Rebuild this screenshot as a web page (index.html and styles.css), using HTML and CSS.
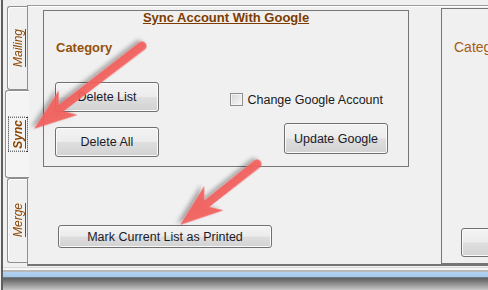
FILE: index.html
```html
<!DOCTYPE html>
<html lang="en">
  <head>
    <meta charset="UTF-8" />
    <title>Sync Account With Google</title>
    <link rel="stylesheet" href="styles.css">
  </head>
  <body>
    <div class="window">
      <div class="client">
        <div class="tabs">
          <div class="tab"><span class="tab-label">Mailing</span></div>
          <div class="tab tab-active"><span class="tab-label">Sync</span></div>
          <div class="tab"><span class="tab-label">Merge</span></div>
        </div>

        <div class="panel">
          <div class="sync-col">
            <div class="group">
              <div class="group-title">Sync Account With Google</div>
              <div class="category">Category</div>
              <div class="actions">
                <div class="btn-stack">
                  <button class="btn btn-wide">Delete List</button>
                  <button class="btn btn-wide">Delete All</button>
                </div>
                <div class="google">
                  <label class="check"><span class="check-box"></span>Change Google Account</label>
                  <button class="btn btn-update">Update Google</button>
                </div>
              </div>
            </div>
            <button class="btn btn-print">Mark Current List as Printed</button>
          </div>

          <div class="group-next">
            <div class="category-light">Category</div>
            <button class="btn btn-cut"></button>
          </div>
        </div>
      </div>
      <div class="frame"></div>

      <!-- callout arrows drawn over the form -->
      <svg class="arrows" width="488" height="290" viewBox="0 0 488 290">
        <defs>
          <filter id="shadow" x="-20%" y="-20%" width="140%" height="140%">
            <feDropShadow dx="2" dy="3" stdDeviation="2" flood-color="#000" flood-opacity="0.35" />
          </filter>
        </defs>
        <path class="arrow" transform="translate(142 46) rotate(142.5)"
          d="M0,-4.5 L102,-4 L93,-15.5 L136,0 L93,15.5 L102,4 L0,4.5 A4.5,4.5 0 0 1 0,-4.5 Z" />
        <path class="arrow" transform="translate(257 164) rotate(141.6)"
          d="M0,-4.5 L64,-4 L55,-15.5 L98,0 L55,15.5 L64,4 L0,4.5 A4.5,4.5 0 0 1 0,-4.5 Z" />
      </svg>
    </div>
  </body>
</html>
```

FILE: styles.css
```css
* {
  margin: 0;
  padding: 0;
  box-sizing: border-box;
}

body {
  background: #f0f0f0;
  font-family: "Liberation Sans", Arial, sans-serif;
}

.window {
  position: relative;
  width: 488px;
  height: 290px;
  overflow: hidden;
  background: #f0f0f0;
}

.client {
  display: flex;
  align-items: flex-start;
  height: 267px;
  margin-left: 1px;
  border-left: 2px solid #5f5f5f;
}

/* vertical tabs */
.tabs {
  display: flex;
  flex-direction: column;
  width: 20px;
  margin-left: 4px;
  margin-top: 6px;
  flex-shrink: 0;
}

.tab {
  display: flex;
  align-items: center;
  justify-content: center;
  width: 20px;
  height: 84px;
  border: 1px solid #8e8f8f;
  border-right: none;
  border-radius: 3px 0 0 3px;
  background: #f0f0f0;
  box-shadow: inset 1px 1px 0 #ffffff;
}

.tab:last-child {
  height: 85px;
}

.tab-active {
  position: relative;
  z-index: 1;
  width: 24px;
  height: 88px;
  margin-left: -2px;
  background: #f4f4f4;
}

.tab-label {
  writing-mode: vertical-rl;
  transform: rotate(180deg);
  font-size: 12px;
  font-style: italic;
  text-decoration: underline;
  color: #8b4500;
}

.tab-active .tab-label {
  font-weight: bold;
  padding: 1px 1px;
  outline: 1px dotted #333333;
  outline-offset: 1px;
}

/* main panel */
.panel {
  display: flex;
  align-items: flex-start;
  flex: 1;
  height: 261px;
  margin-top: 5px;
  overflow: hidden;
  border-top: 1px solid #9c9c9c;
  border-left: 1px solid #8e8f8f;
  border-bottom: 2px solid #747474;
  box-shadow: inset 0 1px 0 #ffffff;
}

.sync-col {
  display: flex;
  flex-direction: column;
  align-items: flex-start;
  margin-left: 15px;
  margin-top: 4px;
  flex-shrink: 0;
}

.group {
  width: 366px;
  height: 157px;
  border: 1px solid #767676;
}

.group-title {
  text-align: center;
  font-size: 13px;
  font-weight: bold;
  line-height: 14px;
  text-decoration: underline;
  color: #7d3c00;
}

.category {
  margin-top: 15px;
  padding-left: 12px;
  font-size: 13px;
  font-weight: bold;
  line-height: 15px;
  color: #95500c;
}

.actions {
  display: flex;
  justify-content: space-between;
  margin: 27px 20px 0 11px;
}

.btn-stack {
  display: flex;
  flex-direction: column;
  gap: 15px;
}

.google {
  display: flex;
  flex-direction: column;
  align-items: flex-end;
  padding-top: 11px;
}

.check {
  display: flex;
  align-items: center;
  gap: 4px;
  height: 13px;
  margin-right: 5px;
  font-size: 12.5px;
  color: #1a1a1a;
}

.check-box {
  width: 13px;
  height: 13px;
  border: 1px solid #8e8f8f;
  background: linear-gradient(135deg, #d6d6d6, #f8f8f8);
  box-shadow: inset 0 0 0 1px #f4f4f4;
}

/* windows 7 style push buttons */
.btn {
  display: flex;
  align-items: center;
  justify-content: center;
  font-family: "Liberation Sans", Arial, sans-serif;
  font-size: 12.5px;
  color: #1a1a2a;
  border: 1px solid #707070;
  border-radius: 3px;
  background: linear-gradient(#f3f3f3 0%, #ececec 48%, #dedede 52%, #d2d2d2 100%);
  box-shadow: inset 0 0 0 1px #fafafa;
}

.btn-wide {
  width: 104px;
  height: 30px;
}

.btn-update {
  width: 104px;
  height: 31px;
  margin-top: 17px;
}

.btn-print {
  width: 214px;
  height: 23px;
  margin-top: 58px;
  margin-left: 15px;
}

.group-next {
  display: flex;
  flex-direction: column;
  align-items: flex-start;
  width: 200px;
  height: 256px;
  margin-left: 32px;
  margin-top: 2px;
  flex-shrink: 0;
  border: 1px solid #767676;
}

.category-light {
  margin-top: 30px;
  padding-left: 12px;
  font-size: 14px;
  line-height: 16px;
  color: #a85c14;
}

.btn-cut {
  width: 120px;
  height: 29px;
  margin-top: auto;
  margin-bottom: 6px;
  margin-left: 19px;
}

/* window frame + screenshot shadow */
.frame {
  height: 23px;
  margin-left: 1px;
  border-left: 2px solid #5f5f5f;
  background: linear-gradient(to bottom,
    #d8d8d8 0, #d8d8d8 1px,
    #f6f6f6 1px, #f6f6f6 3px,
    #b8b8b8 3px, #b8b8b8 5px,
    #b4d3f1 5px, #a4c6e8 10px,
    #6f7c8a 10px, #6f7c8a 11px,
    #5c5c5c 11px, #c6c6c6 23px);
}

.arrows {
  position: absolute;
  top: 0;
  left: 0;
  pointer-events: none;
}

.arrow {
  fill: #f2605e;
  fill-opacity: 0.93;
  filter: url(#shadow);
}
```
